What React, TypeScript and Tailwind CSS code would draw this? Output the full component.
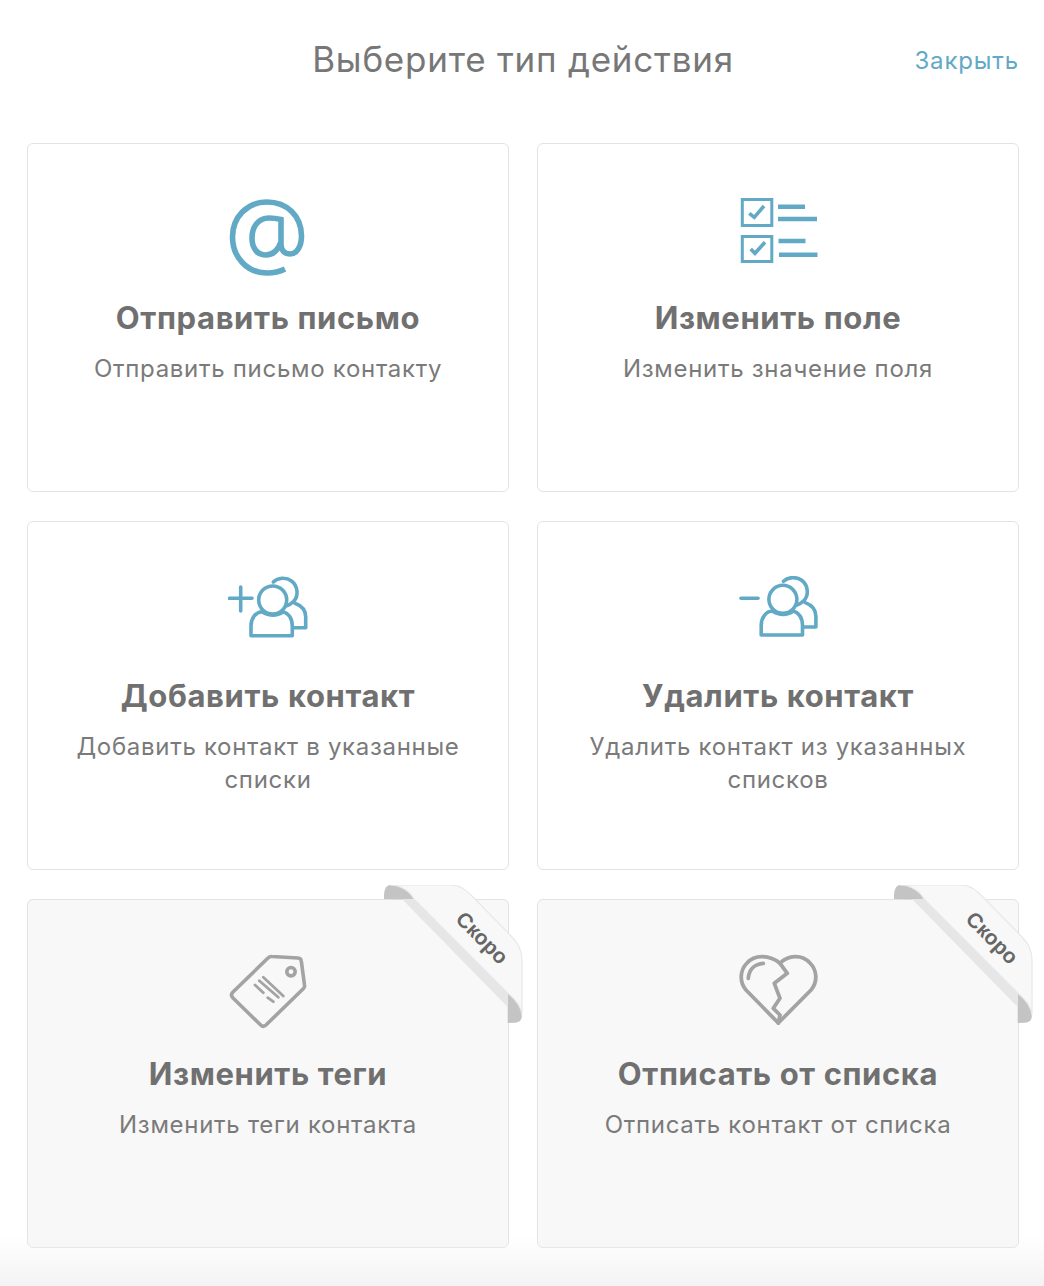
import React from "react";

const BLUE = "#62a9c6";
const GREY = "#a3a3a3";

function AtIcon() {
  return (
    <svg viewBox="0 0 80 80" className="w-full h-full" fill="none" stroke={BLUE} strokeWidth="5.6" strokeLinecap="butt">
      <path d="M57 71 C52 73.5 46 75 39 75 C19 75 4.5 59 4.5 39 C4.5 19 19 4 39 4 C59 4 73.5 18 73.5 38 C73.5 48 69 56 62 56 C56 56 53 52 53 46 L53 21.5 C49 20.5 45 20 41 20 C30 20 24 29 24 40 C24 50 29 57 38 57 C45 57 50 52 53 44" />
    </svg>
  );
}

function ListIcon() {
  return (
    <svg viewBox="0 0 80 80" className="w-full h-full" fill="none" stroke={BLUE}>
      <rect x="4.3" y="1.5" width="29.5" height="26" strokeWidth="3" />
      <rect x="4.3" y="38.5" width="29.5" height="25" strokeWidth="3" />
      <path d="M11.3 15.3 L16.3 19.3 L26 8" strokeWidth="3.6" />
      <path d="M12.7 51 L17 55.3 L27 44.3" strokeWidth="3.6" />
      <path d="M40 8.7 H67 M40 21 H79 M40.5 43 H67.5 M41 56.7 H79.5" strokeWidth="4.4" />
    </svg>
  );
}

function PeopleIcon({ plus }: { plus: boolean }) {
  return (
    <svg viewBox="0 0 80 80" className="w-full h-full" fill="none" stroke={BLUE} strokeWidth="3.6" strokeLinecap="round" strokeLinejoin="round">
      {plus ? <path d="M1.5 22.3 H24 M12.7 11 V35" /> : <path d="M3 22.3 H20" />}
      <g transform={plus ? undefined : "translate(0.2 -0.7)"}>
        <circle cx="44.7" cy="24" r="14" />
        <path d="M23 59.7 V50 C23 42 28 36 34 35.7 C41 40 49 40 55.3 35.7 C60 37 64.3 42 64.3 50 V59.7 Z" />
        <path d="M45.3 6 C50 1.5 58 1 63.5 5 C70 10 71 20 65.5 25.5 C63.5 27.5 61 29 58.7 29.7" />
        <path d="M67 27.3 C73 29.5 77.7 34 77.7 41 V51.7 H65.3" />
      </g>
    </svg>
  );
}

function TagIcon() {
  return (
    <svg viewBox="0 0 80 80" className="w-full h-full" fill="none" stroke={GREY} strokeWidth="3.6" strokeLinecap="round" strokeLinejoin="round">
      <path d="M5 38 L40 4 Q41.5 2.3 44 2.5 L70 4 Q73 4.2 73.3 7 L76.5 31 Q77 33.5 75 35 L38 71 Q35.3 73.5 32.7 71 L5 44 Q2 41 5 38 Z" />
      <circle cx="63" cy="17.7" r="4.2" />
      <path d="M35.3 23.3 L55.3 42 M31.3 26.7 L50.3 43.3 M27 31 L35.3 38.7 M39.7 43.7 L45.3 47.7" strokeWidth="2.8" />
    </svg>
  );
}

function HeartIcon() {
  return (
    <svg viewBox="0 0 80 80" className="w-full h-full" fill="none" stroke={GREY} strokeWidth="3.8" strokeLinecap="round" strokeLinejoin="round">
      <path d="M40.3 69 L8 36 C1 28 2 16 9 9 C17 0 32 1 42 9.3 C50 1 64 0 72 9 C79 16 80 28 73 36 Z" />
      <path d="M42 9.3 L49.3 19.3 L36.3 29.3 L42 44.3 L35.3 54.3 L42 61 L40.3 69" />
      <path d="M10.3 24.3 C11 15 17 10 25.3 9.3" />
    </svg>
  );
}

function Ribbon() {
  return (
    <>
      <svg viewBox="0 0 140 140" className="absolute top-[-15px] right-[-16px] w-[140px] h-[140px]">
        <path d="M0 14 C-0.5 5 2 0 6 0 C16 0 26 6 31 14.5 Z" fill="#c4c4c4" />
        <path d="M123.7 108 C131 114 137.5 122 137.8 130 C138 135 136 137 131 137.8 L123.7 138 Z" fill="#c4c4c4" />
        <path d="M18 14 L30 14 L123.7 108 L123.7 122 Z" fill="#e6e6e6" />
        <path d="M6 0 L66 0 C76 0 82 5 88 11 L128 52 C134 58 138 66 138 75 L138 130 C137.5 122 131 114 123.7 108 L30 14 C26 6 16 0 6 0 Z" fill="#f8f8f8" stroke="#e8e8e8" strokeWidth="1.2" />
      </svg>
      <span className="absolute top-[28px] right-[-14px] w-[80px] h-[20px] text-center rotate-45 text-[21px] leading-[20px] font-bold text-[#666666] font-['Liberation_Sans',sans-serif]">
        Скоро
      </span>
    </>
  );
}

function Card({ icon, title, desc, soon }: { icon: React.ReactNode; title: string; desc: React.ReactNode; soon?: boolean }) {
  return (
    <div className={`relative h-[349px] rounded-[6px] border border-[#e3e3e3] pt-[54px] px-[40px] text-center ${soon ? "bg-[#f8f8f8]" : "bg-white"}`}>
      <div className="w-[80px] h-[80px] mx-auto">{icon}</div>
      <div className="mt-[20px] text-[31px] leading-[40px] font-bold text-[#707070] tracking-[0.6px]">{title}</div>
      <div className="mt-[14px] text-[24px] leading-[33px] text-[#7a7a7a] tracking-[0.7px]">{desc}</div>
      {soon && <Ribbon />}
    </div>
  );
}

export default function App() {
  return (
    <div className="relative h-[1286px] bg-white overflow-hidden font-['Inter',sans-serif]">
      <div className="relative h-[143px]">
        <div className="pt-[36px] pl-[2px] text-center text-[35px] leading-[46px] text-[#777777] tracking-[0.76px]">Выберите тип действия</div>
        <div className="absolute top-[44px] right-[25px] text-[24px] leading-[33px] text-[#62a9c6] tracking-[0.85px]">Закрыть</div>
      </div>
      <div className="grid grid-cols-2 gap-x-[28px] gap-y-[29px] pl-[27px] pr-[25px]">
        <Card icon={<AtIcon />} title="Отправить письмо" desc="Отправить письмо контакту" />
        <Card icon={<ListIcon />} title="Изменить поле" desc="Изменить значение поля" />
        <Card icon={<PeopleIcon plus />} title="Добавить контакт" desc="Добавить контакт в указанные списки" />
        <Card icon={<PeopleIcon plus={false} />} title="Удалить контакт" desc="Удалить контакт из указанных списков" />
        <Card soon icon={<TagIcon />} title="Изменить теги" desc="Изменить теги контакта" />
        <Card soon icon={<HeartIcon />} title="Отписать от списка" desc="Отписать контакт от списка" />
      </div>
      <div className="absolute left-0 right-0 bottom-0 h-[50px] bg-gradient-to-b from-[#f3f3f300] to-[#f3f3f3] pointer-events-none" />
    </div>
  );
}
